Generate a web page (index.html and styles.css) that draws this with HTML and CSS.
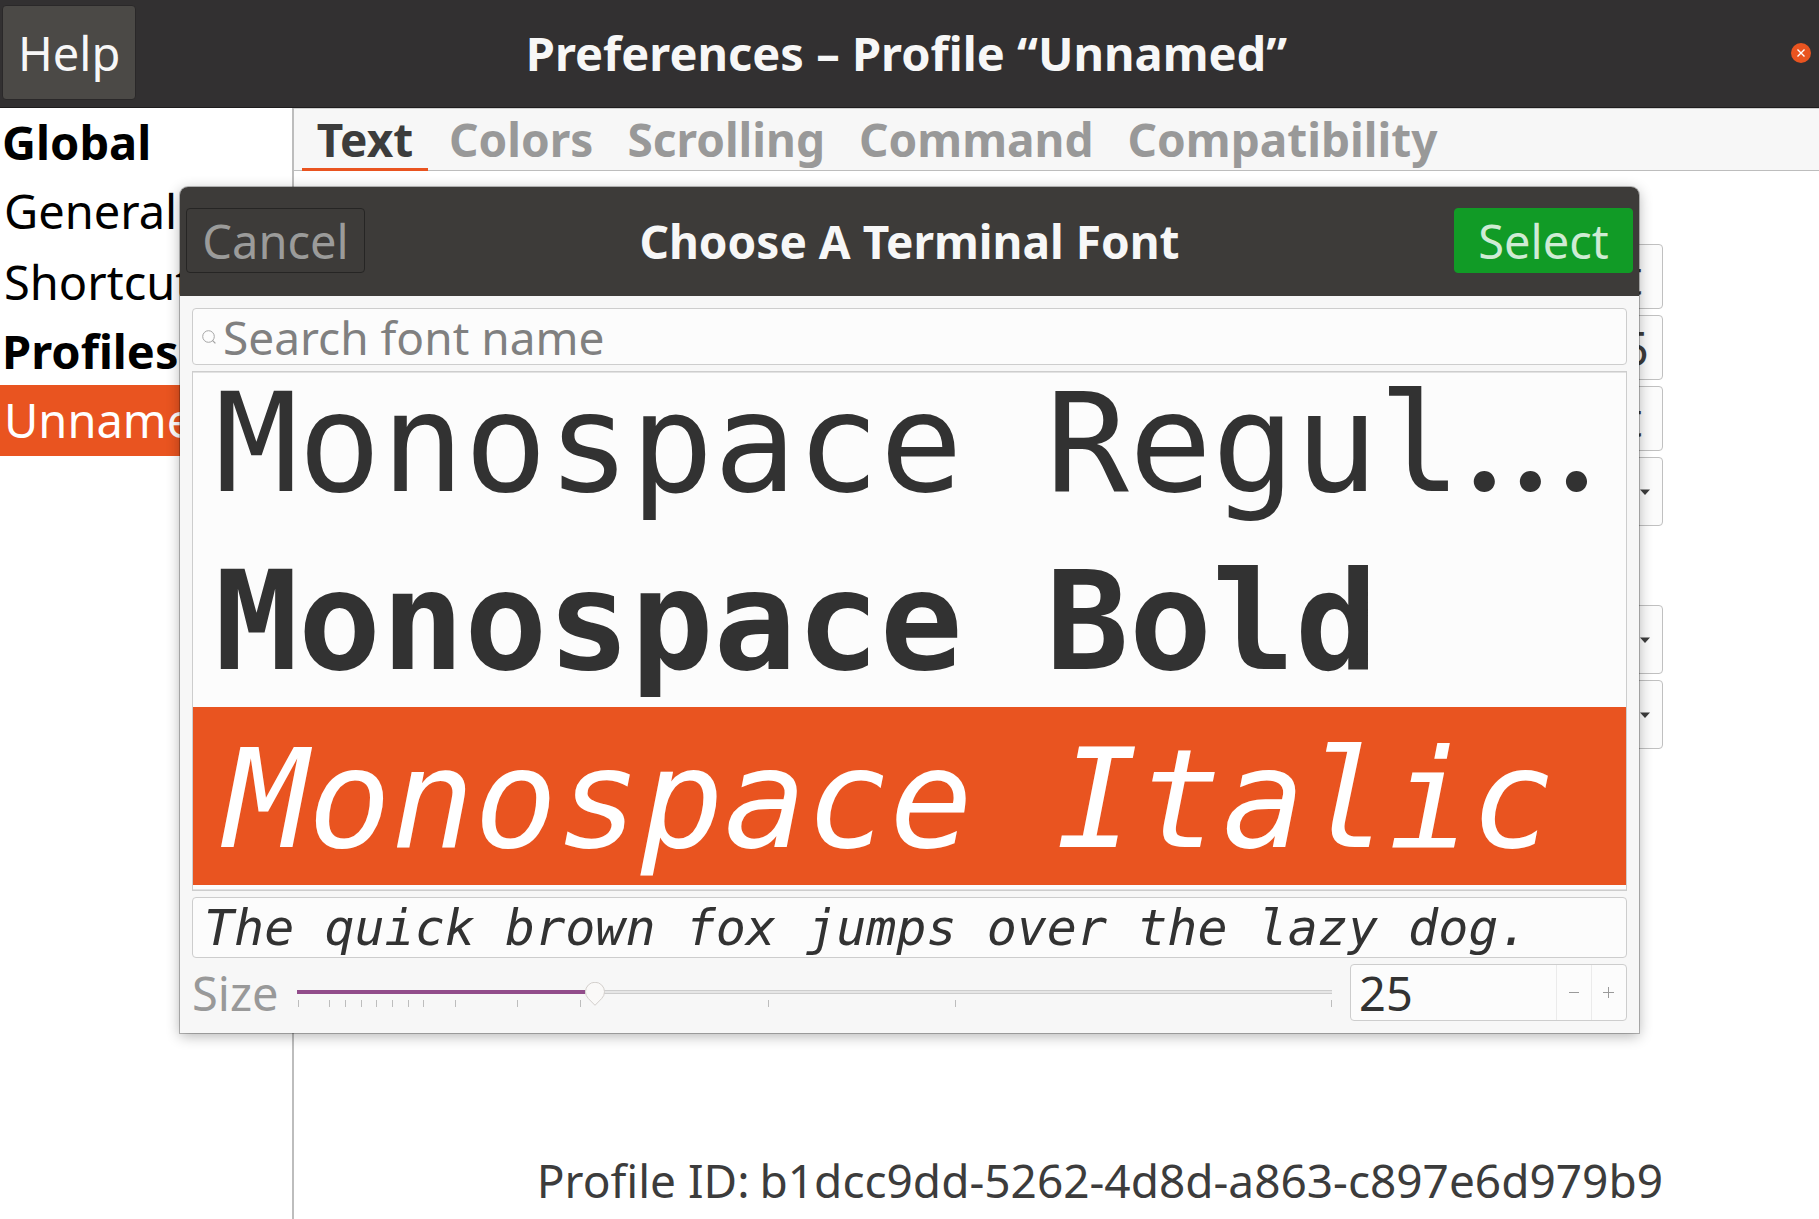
FILE: index.html
```html
<!DOCTYPE html>
<html lang="en">
<head>
<meta charset="utf-8">
<title>Preferences – Profile “Unnamed”</title>
<link rel="stylesheet" href="styles.css">
</head>
<body>
<div class="window">
  <header class="titlebar">
    <button class="help" type="button">Help</button>
    <h1 class="title">Preferences – Profile “Unnamed”</h1>
    <button class="close" type="button" aria-label="Close">
      <svg width="20" height="20" viewBox="0 0 20 20" aria-hidden="true"><circle cx="10" cy="10" r="10" fill="#e95420"/><path d="M6.5 6.5l7 7M13.5 6.5l-7 7" stroke="#fff" stroke-width="1.4" fill="none"/></svg>
    </button>
  </header>

  <div class="main">
    <nav class="sidebar">
      <h2 class="group">Global</h2>
      <a class="item" href="#general">General</a>
      <a class="item" href="#shortcuts">Shortcuts</a>
      <h2 class="group">Profiles</h2>
      <a class="item selected" href="#unnamed">Unnamed</a>
    </nav>

    <section class="page">
      <nav class="tabs">
        <a class="tab active" href="#text">Text</a>
        <a class="tab" href="#colors">Colors</a>
        <a class="tab" href="#scrolling">Scrolling</a>
        <a class="tab" href="#command">Command</a>
        <a class="tab" href="#compatibility">Compatibility</a>
      </nav>
      <div class="form">
        <button class="field reset" type="button">t</button>
        <button class="field font" type="button">5</button>
        <button class="field reset" type="button">t</button>
        <div class="picker">
          <select class="field tall" aria-label="Cursor shape"><option></option></select>
          <svg class="arrow" width="10" height="6" viewBox="0 0 10 6" aria-hidden="true"><path d="M0 .5h10L5 6z" fill="#3c3c3c"/></svg>
        </div>
        <div class="picker spaced">
          <select class="field tall" aria-label="Cursor blinking"><option></option></select>
          <svg class="arrow" width="10" height="6" viewBox="0 0 10 6" aria-hidden="true"><path d="M0 .5h10L5 6z" fill="#3c3c3c"/></svg>
        </div>
        <div class="picker">
          <select class="field tall" aria-label="Bell"><option></option></select>
          <svg class="arrow" width="10" height="6" viewBox="0 0 10 6" aria-hidden="true"><path d="M0 .5h10L5 6z" fill="#3c3c3c"/></svg>
        </div>
        <p class="profile-id"><span>Profile ID:</span><span>b1dcc9dd-5262-4d8d-a863-c897e6d979b9</span></p>
      </div>
    </section>
  </div>

  <div class="dialog" role="dialog" aria-labelledby="dialog-title">
    <header class="dialog-bar">
      <button class="action" type="button">Cancel</button>
      <h2 class="title small" id="dialog-title">Choose A Terminal Font</h2>
      <button class="action select" type="button">Select</button>
    </header>
    <div class="dialog-body">
      <label class="search">
        <svg width="14" height="14" viewBox="0 0 14 14" aria-hidden="true"><circle cx="6.5" cy="6.5" r="5.8" fill="none" stroke="#a5a5a5"/><path d="M10.4 10.4l3 3" stroke="#a5a5a5" stroke-width="1.3"/></svg>
        <input type="text" placeholder="Search font name" aria-label="Search font name">
      </label>
      <ul class="fonts">
        <li class="face">Monospace Regul<span class="dots">…</span></li>
        <li class="face bold">Monospace Bold</li>
        <li class="face italic">Monospace Italic</li>
      </ul>
      <input class="preview" type="text" value="The quick brown fox jumps over the lazy dog." aria-label="Preview text">
      <div class="size-row">
        <label class="size-label" for="size">Size</label>
        <div class="scale">
          <input class="range" id="size" type="range" min="6" max="72" value="25">
          <div class="ticks"><i></i><i></i><i></i><i></i><i></i><i></i><i></i><i></i><i></i><i></i><i></i><i></i><i></i></div>
        </div>
        <div class="spin">
          <input type="text" value="25" aria-label="Size value">
          <button type="button" aria-label="Decrease"><svg width="12" height="12" viewBox="0 0 12 12" aria-hidden="true"><path d="M1 5.5h10" stroke="#9a9a9a"/></svg></button>
          <button type="button" aria-label="Increase"><svg width="12" height="12" viewBox="0 0 12 12" aria-hidden="true"><path d="M0 5.5h11M5.500 0v11" stroke="#9a9a9a"/></svg></button>
        </div>
      </div>
    </div>
  </div>
</div>
</body>
</html>
```
FILE: styles.css
```css
* {
  box-sizing: border-box;
}

body {
  margin: 0;
  background: #fff;
  color: #3c3c3c;
  font: 47px/64px "Noto Sans", sans-serif;
}

h1, h2, p, ul {
  margin: 0;
  padding: 0;
}

a {
  color: inherit;
  text-decoration: none;
}

button, input, select {
  margin: 0;
  padding: 0;
  border: 0;
  background: none;
  color: inherit;
  font: inherit;
  outline: 0;
}

svg {
  display: block;
}

.window {
  position: relative;
  display: flex;
  flex-direction: column;
  min-height: 100vh;
  overflow: hidden;
}

/* Title bar */
.titlebar {
  display: grid;
  grid-template-columns: 1fr auto 1fr;
  align-items: center;
  padding: 5px 8px 7px 2px;
  height: 108px;
  border-bottom: 1px solid #1e1c1d;
  background: #323031;
  color: #f7f7f7;
}

.title {
  font-size: 47px;
  line-height: 64px;
  font-weight: 700;
  text-align: center;
}

.title.small {
  font-size: 46px;
}

.help {
  justify-self: start;
  height: 95px;
  padding: 0 15px;
  border: 1px solid #2a2829;
  border-radius: 4px;
  background: #4b4946;
}

.close {
  justify-self: end;
}

/* Body */
.main {
  flex: 1;
  display: flex;
}

.sidebar {
  flex: none;
  width: 294px;
  padding-top: 1px;
  border-right: 2px solid #bdbdbd;
  overflow: hidden;
  color: #000;
}

.group {
  padding-left: 2px;
  font-size: 47px;
  line-height: 67px;
}

.item {
  display: block;
  padding-left: 4px;
  line-height: 71px;
}

.item.selected {
  background: #e95420;
  color: #fff;
}

.page {
  flex: 1;
  display: flex;
  flex-direction: column;
}

.tabs {
  display: flex;
  gap: 8px;
  height: 63px;
  padding-left: 8px;
  background: #f7f7f7;
  box-shadow: inset 0 -1px #bdbdbd, inset 0 1px #cfcfcf;
}

.tab {
  min-width: 126px;
  padding: 2px 13px 0;
  border-bottom: 3px solid transparent;
  color: #999;
  font-size: 46px;
  font-weight: 700;
  line-height: 58px;
  text-align: center;
}

.tab.active {
  border-color: #e95420;
  color: #3c3c3c;
}

.form {
  flex: 1;
  display: flex;
  flex-direction: column;
  align-items: flex-end;
  gap: 6px;
  padding: 73px 156px 7px;
}

.field {
  width: 400px;
  height: 65px;
  border: 1px solid #c0c0c0;
  border-radius: 4px;
  background: #fbfbfb;
  text-align: right;
}

.reset {
  padding-right: 20px;
}

.font {
  padding-right: 13px;
}

.picker {
  display: grid;
  align-items: center;
}

.picker > * {
  grid-area: 1 / 1;
}

.tall {
  height: 69px;
  appearance: none;
}

.arrow {
  justify-self: end;
  margin-right: 13px;
  pointer-events: none;
}

.spaced {
  margin-top: 73px;
}

.profile-id {
  display: flex;
  gap: 10px;
  margin-top: auto;
  font-size: 46px;
}

/* Font chooser */
.dialog {
  position: absolute;
  top: 187px;
  left: 180px;
  right: 180px;
  border-radius: 8px 8px 0 0;
  background: #f7f7f7;
  box-shadow: 0 0 0 1px rgba(0, 0, 0, .25), 0 3px 14px rgba(0, 0, 0, .3);
}

.dialog-bar {
  display: grid;
  grid-template-columns: 1fr auto 1fr;
  align-items: center;
  height: 109px;
  padding: 0 6px 2px;
  border-radius: 8px 8px 0 0;
  background: #3d3b39;
  color: #f7f7f7;
}

.action {
  width: 179px;
  height: 65px;
  border: 1px solid #262524;
  border-radius: 4px;
  color: #9b9b9a;
  line-height: 60px;
}

.select {
  justify-self: end;
  border-color: #119b26;
  background: #119b26;
  color: #cfebd4;
}

.dialog-body {
  display: flex;
  flex-direction: column;
  gap: 6px;
  padding: 12px;
}

.search, .preview, .spin {
  border: 1px solid #cdcdcd;
  border-radius: 4px;
  background: #fcfcfc;
}

.search {
  display: flex;
  align-items: center;
  gap: 7px;
  height: 57px;
  padding: 0 9px;
  font-size: 46px;
}

.search input {
  flex: 1;
  min-width: 0;
  height: 55px;
}

.search input::placeholder {
  color: #808080;
}

.fonts {
  display: flex;
  flex-direction: column;
  justify-content: flex-end;
  height: 520px;
  padding-bottom: 5px;
  border: 1px solid #cdcdcd;
  background: #fcfcfc;
  box-shadow: inset 0 1px #e2e2e2, inset 0 -1px #e2e2e2;
  overflow: hidden;
  list-style: none;
}

.face {
  flex: none;
  height: 178px;
  padding: 7px 0 0 22px;
  color: #323232;
  font: 138px/172px "DejaVu Sans Mono", monospace;
  white-space: nowrap;
}

.dots {
  font: 160px/100px "Inter", sans-serif;
}

.face.bold {
  font-weight: 700;
}

.face.italic {
  padding-left: 32px;
  background: #e95420;
  color: #fff;
  font-style: italic;
}

.preview {
  width: 100%;
  height: 61px;
  padding: 0 11px;
  color: #323232;
  font: italic 50px/59px "DejaVu Sans Mono", monospace;
}

.size-row {
  display: flex;
  align-items: center;
  gap: 18px;
  height: 57px;
}

.size-label {
  width: 87px;
  color: #999;
}

.scale {
  flex: 1;
  display: grid;
  padding-top: 3px;
}

.scale > * {
  grid-area: 1 / 1;
}

.range {
  width: calc(100% + 20px);
  height: 25px;
  margin: 0 -10px;
  appearance: none;
  background:
    linear-gradient(#924d8b, #924d8b) 10px 8px / 288px 4px no-repeat,
    linear-gradient(#cdcdcd 0 1px, #e6e6e6 1px 3px, #cdcdcd 3px) 10px 8px / calc(100% - 20px) 4px no-repeat;
}

.range::-webkit-slider-thumb {
  width: 20px;
  height: 25px;
  appearance: none;
  background: url("data:image/svg+xml,%3Csvg xmlns='http://www.w3.org/2000/svg' width='20' height='25'%3E%3Cpath d='M10 23.3L3.3 16.5A9.5 9.5 0 1 1 16.700 16.500Z' fill='%23faf9f8' stroke='%23d3cfcc'/%3E%3C/svg%3E") no-repeat;
}

.ticks {
  display: grid;
  grid-template-columns: 2fr 1fr 1fr 1fr 1fr 1fr 1fr 2fr 4fr 4fr 12fr 12fr 24fr;
  align-self: end;
  height: 7px;
  margin-left: 1px;
  border-right: 1px solid #bdbdbd;
  pointer-events: none;
}

.ticks i {
  border-left: 1px solid #bdbdbd;
}

.spin {
  display: flex;
  width: 277px;
  height: 57px;
}

.spin input {
  flex: 1;
  min-width: 0;
  padding-left: 8px;
  color: #323232;
}

.spin button {
  display: grid;
  place-items: center;
  width: 35px;
  border-left: 1px solid #ebebeb;
}
```
